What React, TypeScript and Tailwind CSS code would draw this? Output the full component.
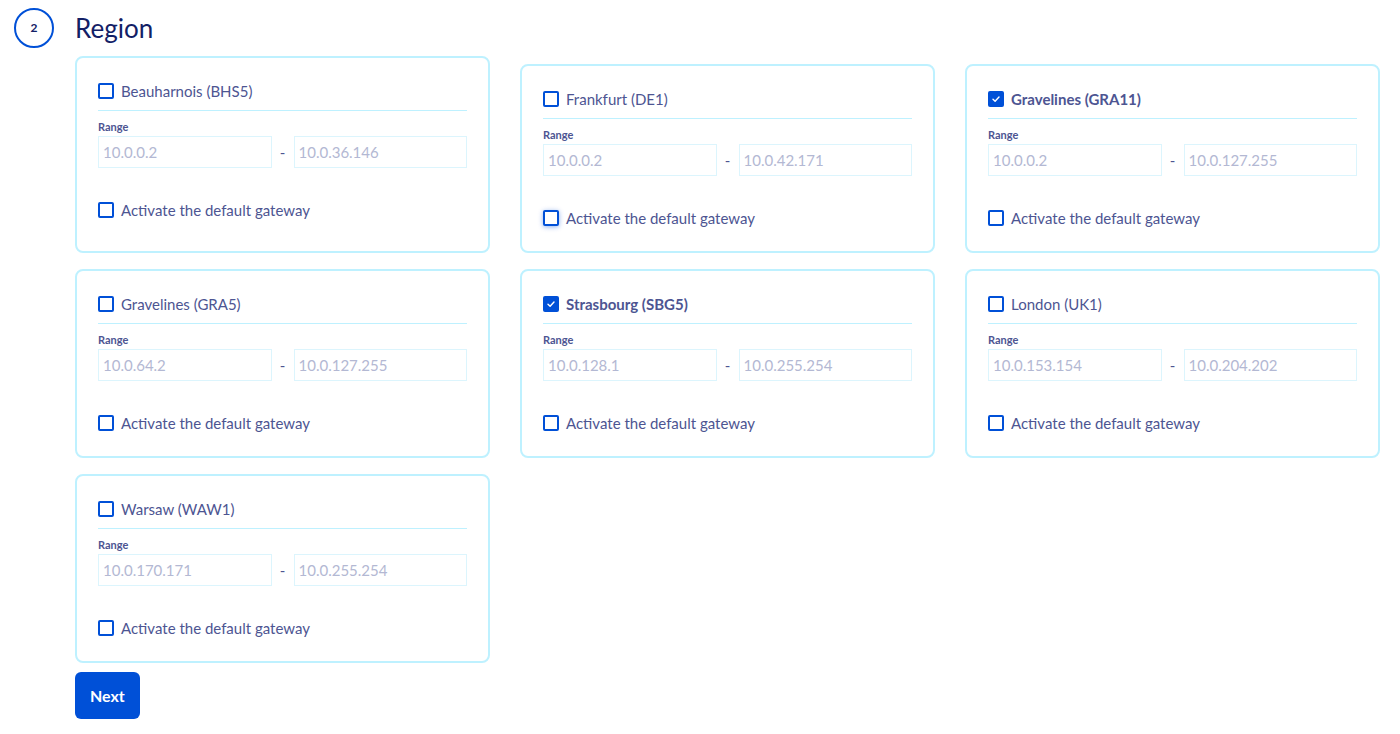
import React from "react";

type Region = { name: string; from: string; to: string; checked?: boolean; focus?: boolean };

const regions: Region[] = [
  { name: "Beauharnois (BHS5)", from: "10.0.0.2", to: "10.0.36.146" },
  { name: "Frankfurt (DE1)", from: "10.0.0.2", to: "10.0.42.171", focus: true },
  { name: "Gravelines (GRA11)", from: "10.0.0.2", to: "10.0.127.255", checked: true },
  { name: "Gravelines (GRA5)", from: "10.0.64.2", to: "10.0.127.255" },
  { name: "Strasbourg (SBG5)", from: "10.0.128.1", to: "10.0.255.254", checked: true },
  { name: "London (UK1)", from: "10.0.153.154", to: "10.0.204.202" },
  { name: "Warsaw (WAW1)", from: "10.0.170.171", to: "10.0.255.254" },
];

function Box({ checked, focus }: { checked?: boolean; focus?: boolean }) {
  if (checked) {
    return (
      <span className="flex h-4 w-4 shrink-0 items-center justify-center rounded-[2px] bg-[#0050d7]">
        <svg width="10" height="10" viewBox="0 0 10 10" fill="none">
          <path d="M2 5.2 L4.1 7.2 L8 3" stroke="white" strokeWidth="1.4" strokeLinecap="round" strokeLinejoin="round" />
        </svg>
      </span>
    );
  }
  return (
    <span
      className={
        focus
          ? "block h-4 w-4 shrink-0 rounded-[2px] border-2 border-[#0050d7] bg-white shadow-[0_1px_5px_rgba(0,80,215,0.45)]"
          : "block h-4 w-4 shrink-0 rounded-[2px] border-2 border-[#0050d7] bg-white"
      }
    />
  );
}

function Card({ r, first }: { r: Region; first?: boolean }) {
  return (
    <div
      className={
        first
          ? "-mt-2 rounded-lg border-2 border-[#bef1ff] px-[21px] pt-[21px] pb-[29px]"
          : "rounded-lg border-2 border-[#bef1ff] px-[21px] pt-[21px] pb-[21px]"
      }
    >
      <div className="flex h-6 items-center gap-[7px]">
        <Box checked={r.checked} />
        <span className={r.checked ? "text-[15px] font-bold text-[#4d5592]" : "text-[15px] text-[#4d5592]"}>{r.name}</span>
      </div>
      <div className="mt-[7px] h-px bg-[#bef1ff]" />
      <div className="mt-2 h-4 text-[11px] leading-4 font-bold text-[#4d5592]">Range</div>
      <div className="mt-px flex items-center">
        <div className="flex h-8 flex-1 items-center border border-[#dcf5fd] pl-[4px] text-[15px] text-[#b3b8d3]">{r.from}</div>
        <div className="w-[22px] text-center text-[15px] text-[#4d5592]">-</div>
        <div className="flex h-8 flex-1 items-center border border-[#dcf5fd] pl-[4px] text-[15px] text-[#b3b8d3]">{r.to}</div>
      </div>
      <div className="mt-[30px] flex h-6 items-center gap-[7px]">
        <Box focus={r.focus} />
        <span className="text-[15px] text-[#4d5592]">Activate the default gateway</span>
      </div>
    </div>
  );
}

export default function App() {
  return (
    <div className="min-h-[734px] bg-white pt-2 font-['Lato',sans-serif]">
      <div className="flex items-center pl-[14px]">
        <div className="flex h-10 w-10 items-center justify-center rounded-full border-2 border-[#0050d7] text-[12px] font-bold text-[#122066]">
          2
        </div>
        <h2 className="ml-[21px] text-[26px] leading-10 text-[#122066]">Region</h2>
      </div>
      <div className="ml-[75px] mt-4 grid w-[1305px] grid-cols-3 gap-x-[30px] gap-y-4">
        {regions.map((r, i) => (
          <Card key={r.name} r={r} first={i === 0} />
        ))}
      </div>
      <div className="ml-[75px] mt-[9px]">
        <button className="h-[47px] rounded-md bg-[#0050d7] px-[15px] text-[16px] font-bold text-white">Next</button>
      </div>
    </div>
  );
}
